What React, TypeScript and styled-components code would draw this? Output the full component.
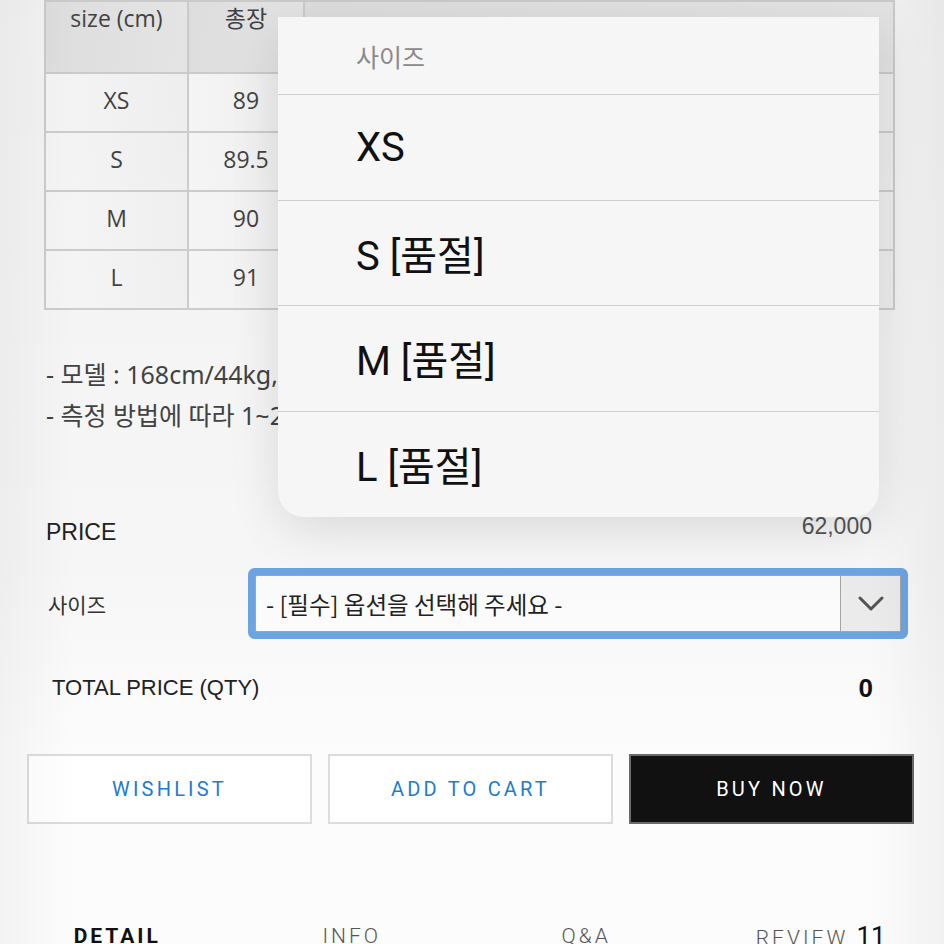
import { FC } from 'react'
import styled, { createGlobalStyle } from 'styled-components'

const GlobalStyle = createGlobalStyle`
  html, body {
    margin: 0;
    padding: 0;
    background: #ffffff;
  }
  body {
    font-family: Roboto, "Noto Sans CJK KR", sans-serif;
    color: #222;
  }
  * {
    box-sizing: border-box;
  }
`

const Page = styled.div`
  position: relative;
  width: 944px;
  height: 944px;
  overflow: hidden;
  background: #fcfcfc;
`

const TableWrap = styled.div`
  padding-left: 44px;
`

const SizeTable = styled.table`
  width: 849px;
  border-collapse: collapse;
  table-layout: fixed;
  border: 2px solid #cfcfcf;
  font-family: "Open Sans", "Noto Sans CJK KR", sans-serif;
  font-size: 23px;
  color: #444;
`

const HeadCell = styled.th`
  height: 72px;
  padding: 0;
  vertical-align: top;
  line-height: 33px;
  font-weight: 400;
  background: linear-gradient(90deg, #e6e6e6, #ededed);
  border: 2px solid #d2d2d2;
`

const BodyCell = styled.td`
  height: 59px;
  padding: 0 0 6px;
  text-align: center;
  background: linear-gradient(90deg, #fdfdfd, #f7f7f7);
  border: 2px solid #d2d2d2;
`

const Notes = styled.div`
  margin-top: 44px;
  padding-left: 46px;
  font-family: "Noto Sans", "Noto Sans CJK KR", sans-serif;
  font-size: 25px;
  line-height: 41px;
  color: #444;
  white-space: nowrap;
`

const PriceRow = styled.div`
  margin-top: 81px;
  padding: 0 72px 0 46px;
  display: flex;
  justify-content: space-between;
  align-items: center;
  height: 30px;
`

const PriceLabel = styled.span`
  font-family: "Liberation Sans", Arial, sans-serif;
  font-size: 23px;
  color: #222;
`

const PriceValue = styled.span`
  font-family: "Liberation Sans", Arial, sans-serif;
  font-size: 23px;
  color: #555;
  padding-bottom: 12px;
`

const OptionRow = styled.div`
  margin-top: 28px;
  padding-left: 48px;
  display: grid;
  grid-template-columns: 207px 646px;
  align-items: center;
`

const OptionLabel = styled.span`
  font-family: "Noto Sans CJK KR", sans-serif;
  font-size: 21px;
  color: #333;
`

const SelectBox = styled.div`
  height: 57px;
  display: flex;
  background: #fff;
  border: 1px solid #a8a8a8;
  border-radius: 2px;
  box-shadow: 0 0 0 7px #6ea7e5;
`

const SelectText = styled.span`
  flex: 1;
  display: flex;
  align-items: center;
  padding-left: 10px;
  font-family: "Noto Sans CJK KR", sans-serif;
  font-size: 23.5px;
  color: #222;
`

const SelectArrow = styled.span`
  width: 60px;
  display: flex;
  align-items: center;
  justify-content: center;
  background: #efefef;
  border-left: 1px solid #a8a8a8;
`

const TotalRow = styled.div`
  margin-top: 41px;
  height: 30px;
  padding: 0 71px 0 52px;
  display: flex;
  justify-content: space-between;
  align-items: center;
`

const TotalLabel = styled.span`
  font-family: "Liberation Sans", Arial, sans-serif;
  font-size: 22px;
  color: #222;
`

const TotalValue = styled.span`
  font-family: "Liberation Sans", Arial, sans-serif;
  font-size: 26px;
  font-weight: 700;
  color: #111;
`

const ButtonRow = styled.div`
  margin-top: 51px;
  padding: 0 30px 0 27px;
  display: grid;
  grid-template-columns: repeat(3, 285px);
  gap: 16px;
`

const ActionButton = styled.button<{ dark?: boolean }>`
  height: 70px;
  border: 2px solid ${(p) => (p.dark ? '#6a6a6a' : '#dcdcdc')};
  background: ${(p) => (p.dark ? '#111111' : '#ffffff')};
  color: ${(p) => (p.dark ? '#ffffff' : '#1c7bd2')};
  font-family: Roboto, sans-serif;
  font-size: 20px;
  letter-spacing: 3.2px;
  font-weight: 400;
  padding: 0;
`

const Tabs = styled.div`
  margin-top: 97px;
  display: grid;
  grid-template-columns: repeat(4, 1fr);
  padding-right: 6px;
`

const Tab = styled.span<{ active?: boolean }>`
  text-align: center;
  font-family: Roboto, sans-serif;
  font-size: 21px;
  line-height: 30px;
  letter-spacing: 3px;
  font-weight: ${(p) => (p.active ? 700 : 300)};
  color: ${(p) => (p.active ? '#111' : '#555')};
`

const TabCount = styled.span`
  font-size: 26px;
  letter-spacing: 0;
  font-weight: 400;
  color: #111;
`

const Backdrop = styled.div`
  position: absolute;
  inset: 0;
  pointer-events: none;
  background:
    linear-gradient(90deg, rgba(0, 0, 0, 0.035), rgba(0, 0, 0, 0) 8%, rgba(0, 0, 0, 0) 92%, rgba(0, 0, 0, 0.045)),
    linear-gradient(180deg, rgba(0, 0, 0, 0.04), rgba(0, 0, 0, 0.025) 60%, rgba(0, 0, 0, 0) 80%);
`

const Popup = styled.div`
  position: absolute;
  left: 278px;
  top: 17px;
  width: 601px;
  height: 500px;
  background: #f6f6f6;
  border-radius: 0 0 26px 26px;
  box-shadow: 0 12px 50px rgba(0, 0, 0, 0.12);
  overflow: hidden;
  display: flex;
  flex-direction: column;
`

const PopupTitle = styled.div`
  height: 78px;
  display: flex;
  align-items: center;
  padding-left: 78px;
  font-family: "Noto Sans CJK KR", sans-serif;
  font-size: 25px;
  color: #8a8a8a;
  border-bottom: 1px solid #cfcfcf;
`

const PopupItem = styled.div<{ last?: boolean }>`
  height: 105.5px;
  display: flex;
  align-items: center;
  padding-left: 78px;
  font-family: Roboto, "Noto Sans CJK KR", sans-serif;
  font-size: 40px;
  color: #111;
  border-bottom: ${(p) => (p.last ? 'none' : '1px solid #cfcfcf')};
`

// only the first two columns show beside the open dropdown
const headers = ['size (cm)', '총장', '']
const rows = [
  ['XS', '89', ''],
  ['S', '89.5', ''],
  ['M', '90', ''],
  ['L', '91', ''],
]
const options = ['XS', 'S [품절]', 'M [품절]', 'L [품절]']
const colWidths = [143, 116, 590]

const Chevron: FC = () => (
  <svg width="26" height="18" viewBox="0 0 26 18">
    <path d="M2 3 L13 14 L24 3" fill="none" stroke="#555" strokeWidth="3" strokeLinecap="round" strokeLinejoin="round" />
  </svg>
)

const App: FC = () => {
  return (
    <Page>
      <GlobalStyle />
      <TableWrap>
        <SizeTable>
          <colgroup>
            {colWidths.map((w, i) => (
              <col key={i} style={{ width: w }} />
            ))}
          </colgroup>
          <thead>
            <tr>
              {headers.map((h, i) => (
                <HeadCell key={i}>{h}</HeadCell>
              ))}
            </tr>
          </thead>
          <tbody>
            {rows.map((r) => (
              <tr key={r[0]}>
                {r.map((c, i) => (
                  <BodyCell key={i}>{c}</BodyCell>
                ))}
              </tr>
            ))}
          </tbody>
        </SizeTable>
      </TableWrap>

      <Notes>
        <div>- 모델 : 168cm/44kg,</div>
        <div>- 측정 방법에 따라 1~2</div>
      </Notes>

      <PriceRow>
        <PriceLabel>PRICE</PriceLabel>
        <PriceValue>62,000</PriceValue>
      </PriceRow>

      <OptionRow>
        <OptionLabel>사이즈</OptionLabel>
        <SelectBox>
          <SelectText>- [필수] 옵션을 선택해 주세요 -</SelectText>
          <SelectArrow>
            <Chevron />
          </SelectArrow>
        </SelectBox>
      </OptionRow>

      <TotalRow>
        <TotalLabel>TOTAL PRICE (QTY)</TotalLabel>
        <TotalValue>0</TotalValue>
      </TotalRow>

      <ButtonRow>
        <ActionButton>WISHLIST</ActionButton>
        <ActionButton>ADD TO CART</ActionButton>
        <ActionButton dark>BUY NOW</ActionButton>
      </ButtonRow>

      <Tabs>
        <Tab active>DETAIL</Tab>
        <Tab>INFO</Tab>
        <Tab>Q&amp;A</Tab>
        <Tab>
          REVIEW <TabCount>11</TabCount>
        </Tab>
      </Tabs>

      <Backdrop />
      <Popup>
        <PopupTitle>사이즈</PopupTitle>
        {options.map((o, i) => (
          <PopupItem key={o} last={i === options.length - 1}>
            {o}
          </PopupItem>
        ))}
      </Popup>
    </Page>
  )
}

export default App
